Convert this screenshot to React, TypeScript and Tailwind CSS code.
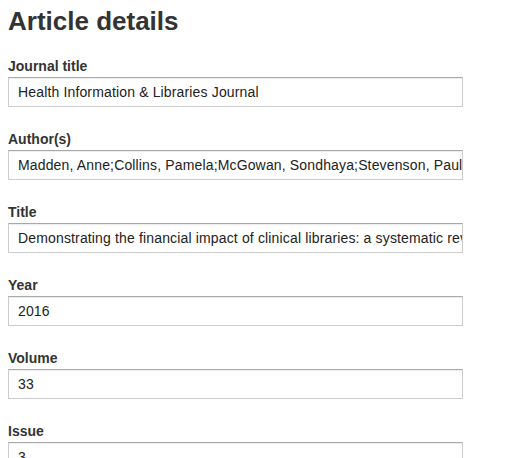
import React from "react";

const fields: { label: string; value: string }[] = [
  { label: "Journal title", value: "Health Information & Libraries Journal" },
  {
    label: "Author(s)",
    value:
      "Madden, Anne;Collins, Pamela;McGowan, Sondhaya;Stevenson, Paul;Castelli, David",
  },
  {
    label: "Title",
    value:
      "Demonstrating the financial impact of clinical libraries: a systematic review",
  },
  { label: "Year", value: "2016" },
  { label: "Volume", value: "33" },
  { label: "Issue", value: "3" },
];

export default function App() {
  return (
    <div
      className="w-[506px] h-[458px] overflow-hidden bg-white text-[#333]"
      style={{ fontFamily: '"Liberation Sans", Arial, sans-serif' }}
    >
      <div className="pl-2 w-[463px]">
        <h1 className="text-[26px] font-bold leading-[28px] pt-[7px] mb-[21px]">
          Article details
        </h1>
        <div className="flex flex-col gap-[22px]">
          {fields.map((f) => (
            <div key={f.label} className="flex flex-col">
              <div className="text-[14px] font-bold leading-[20px] mb-[1px]">
                {f.label}
              </div>
              <div className="h-[30px] border border-[#ccc] border-t-[#aaa] shadow-[inset_0_1px_1px_rgba(0,0,0,0.075)] bg-white pl-[9px] flex items-center overflow-hidden whitespace-nowrap text-[14px] tracking-[0.15px] text-[#222]">
                {f.value}
              </div>
            </div>
          ))}
        </div>
      </div>
    </div>
  );
}
